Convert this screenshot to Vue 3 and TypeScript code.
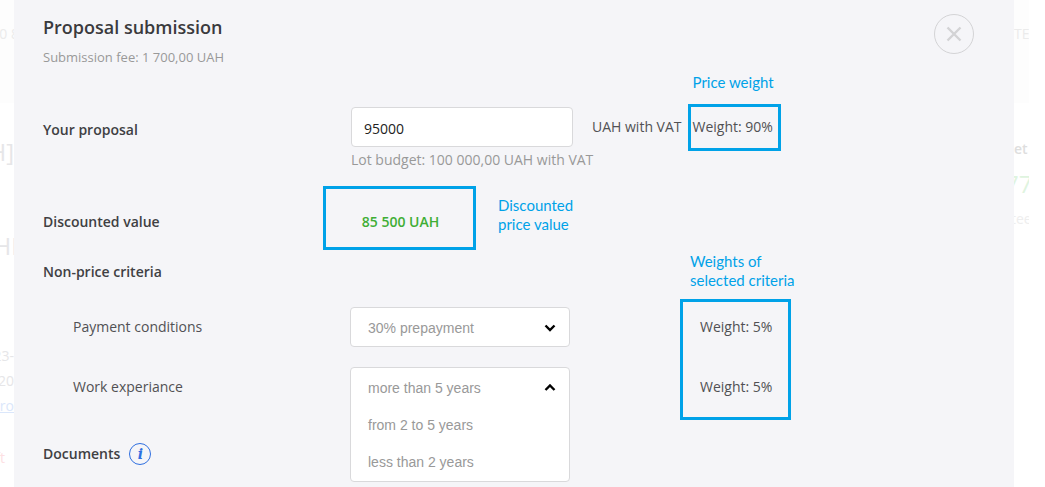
<script setup lang="ts">
import { ref, computed } from 'vue'

const proposal = ref('95000')
const payment = ref('30% prepayment')
const experience = ref('more than 5 years')

const paymentOptions: string[] = ['30% prepayment', '50% prepayment', 'Postpayment']
const experienceOptions: string[] = ['more than 5 years', 'from 2 to 5 years', 'less than 2 years']

const priceWeight = 90
const criteriaWeights: number[] = [5, 5]

const discounted = computed(() => {
  const value = Math.round((Number(proposal.value) || 0) * (priceWeight / 100))
  return String(value).replace(/\B(?=(\d{3})+$)/g, ' ') + ' UAH'
})
</script>

<template>
  <div class="page">
    <div class="strip strip-left" aria-hidden="true">
      <p class="ghost first">0 8</p>
      <p class="ghost big heading">H]</p>
      <p class="ghost big city">HI</p>
      <p class="ghost date">23-</p>
      <p class="ghost">20</p>
      <p class="ghost blue">ro</p>
      <p class="ghost red">ft</p>
    </div>

    <main class="modal" role="dialog" aria-labelledby="dialog-title">
      <header class="head">
        <div>
          <h1 id="dialog-title">Proposal submission</h1>
          <p class="fee">Submission fee: 1 700,00 UAH</p>
        </div>
        <button class="close" type="button" aria-label="Close">
          <svg viewBox="0 0 40 40" width="40" height="40">
            <circle cx="20" cy="20" r="19.5" fill="none" stroke="#d3d3d5" />
            <path d="M13.5 13.5 26.5 26.5M26.5 13.5 13.5 26.5" fill="none" stroke="#d3d3d5" stroke-width="2.4" />
          </svg>
        </button>
      </header>

      <form @submit.prevent>
        <div class="price-row">
          <label class="name price-label" for="proposal">Your proposal</label>
          <div class="price-field">
            <input id="proposal" v-model="proposal" type="text" inputmode="numeric" />
            <p class="hint">Lot budget: 100 000,00 UAH with VAT</p>
          </div>
          <div class="price-side">
            <span>UAH with VAT</span>
            <span class="frame price-frame">
              <span class="note above-price">Price weight</span>
              Weight: {{ priceWeight }}%
            </span>
          </div>
        </div>

        <div class="discount-row">
          <label class="name discount-label" for="discounted">Discounted value</label>
          <output id="discounted" class="frame discount" for="proposal">{{ discounted }}</output>
          <p class="note">Discounted<br />price value</p>
        </div>

        <h2 class="name section">Non-price criteria</h2>

        <div class="criteria">
          <div class="fields">
            <div class="field">
              <label for="payment">Payment conditions</label>
              <div class="picker">
                <select id="payment" v-model="payment" class="closed">
                  <option v-for="o in paymentOptions" :key="o">{{ o }}</option>
                </select>
                <svg class="arrow" viewBox="0 0 12 8" width="12" height="8" aria-hidden="true">
                  <path d="M1.5 1.5 6 6 10.5 1.5" fill="none" stroke="#000" stroke-width="2.4" />
                </svg>
              </div>
            </div>
            <div class="field">
              <label for="experience">Work experiance</label>
              <div class="picker">
                <select id="experience" v-model="experience" class="open" size="3">
                  <option v-for="o in experienceOptions" :key="o">{{ o }}</option>
                </select>
                <svg class="arrow" viewBox="0 0 12 8" width="12" height="8" aria-hidden="true">
                  <path d="M1.5 6 6 1.5 10.5 6" fill="none" stroke="#000" stroke-width="2.4" />
                </svg>
              </div>
            </div>
          </div>
          <div class="frame weights">
            <span class="note above-weights">Weights of<br />selected criteria</span>
            <span v-for="(w, i) in criteriaWeights" :key="i" class="weight">Weight: {{ w }}%</span>
          </div>
        </div>

        <div class="documents">
          <h2 class="name">Documents</h2>
          <button class="info" type="button" aria-label="About documents">i</button>
        </div>
      </form>
    </main>

    <div class="strip strip-right" aria-hidden="true">
      <p class="ghost first">TE</p>
      <p class="ghost bold">et</p>
      <p class="ghost big green">77</p>
      <p class="ghost pale">tee</p>
    </div>
  </div>
</template>

<style>
body {
  margin: 0;
  background: #fff;
}
</style>

<style scoped>
* {
  box-sizing: border-box;
}
p,
h1,
h2 {
  margin: 0;
}
.page {
  display: grid;
  grid-template-columns: 14px minmax(0, 1fr) 15px;
  min-height: 100vh;
  padding-right: 16px;
  font: 14px/20px 'Open Sans', 'Noto Sans', sans-serif;
  color: #515154;
}
.strip {
  overflow: hidden;
  background: linear-gradient(#fdfdfd 103px, #fff 103px);
}
.ghost {
  color: #e6e6e8;
  line-height: 25px;
  white-space: nowrap;
}
.strip-left .ghost {
  display: flex;
  justify-content: flex-end;
}
.ghost.first {
  margin-top: 21px;
  color: #ebebeb;
}
.strip-left .ghost.first {
  margin-right: -5px;
}
.ghost.big {
  font-size: 24px;
}
.ghost.heading {
  margin-top: 93px;
}
.ghost.city {
  margin-top: 69px;
}
.strip-left .ghost.city {
  margin-right: -4px;
}
.ghost.date {
  margin-top: 85px;
}
.ghost.blue {
  color: #dbe7fb;
  text-decoration: underline;
}
.ghost.red {
  margin-top: 27px;
  color: #fde0e3;
}
.strip-left .ghost.red {
  margin-right: 9px;
}
.ghost.bold {
  margin-top: 90px;
  color: #dedede;
  font-weight: 600;
}
.ghost.green {
  margin-top: 10px;
  margin-left: -9px;
  color: #dff4df;
}
.ghost.pale {
  margin-top: 10px;
  margin-left: -3px;
  color: #eeeeee;
}

.modal {
  padding: 14px 40px 0 29px;
  background: #f5f5f8;
}
.head {
  display: flex;
  justify-content: space-between;
  align-items: flex-start;
}
h1 {
  color: #3a3a3d;
  font-size: 18px;
  font-weight: 600;
  line-height: 26px;
}
.fee {
  margin-top: 7px;
  color: #999;
  font-size: 13px;
}
.close {
  padding: 0;
  border: 0;
  background: none;
  cursor: pointer;
}
.close svg {
  display: block;
}
.name {
  color: #404043;
  font-size: 14px;
  font-weight: 600;
  line-height: 20px;
}
.frame {
  position: relative;
  border: 3px solid #00a2e8;
}
.note {
  color: #00a2e8;
  font: 15px/19px Lato, 'Open Sans', sans-serif;
  white-space: nowrap;
}

.price-row {
  display: grid;
  grid-template-columns: 308px 222px 1fr;
  margin-top: 40px;
}
.price-label {
  padding-top: 13px;
}
input {
  display: block;
  width: 100%;
  height: 40px;
  padding: 2px 12px 0;
  border: 1px solid #d9d9db;
  border-radius: 4px;
  background: #fff;
  color: #222;
  font: inherit;
}
.hint {
  margin-top: 3px;
  color: #999;
  white-space: nowrap;
}
.price-side {
  display: flex;
  align-items: center;
  gap: 6px;
  height: 40px;
  padding-left: 19px;
  white-space: nowrap;
}
.price-frame {
  padding: 10px 5px 11px 2px;
}
.above-price {
  position: absolute;
  bottom: calc(100% + 15px);
  left: 2px;
}

.discount-row {
  display: grid;
  grid-template-columns: 280px 153px 1fr;
  align-items: center;
  margin-top: 16px;
}
.discount-label {
  padding-top: 8px;
}
.discount {
  height: 64px;
  padding: 23px 0 0 2px;
  color: #3fae35;
  font-weight: 600;
  text-align: center;
}
.discount-row .note {
  padding: 0 0 6px 22px;
}

.section {
  margin-top: 12px;
}
.criteria {
  display: grid;
  grid-template-columns: 637px 111px;
  margin-top: 17px;
}
.fields {
  display: grid;
  align-content: start;
  gap: 20px;
  padding-top: 8px;
}
.field {
  display: grid;
  grid-template-columns: 277px 220px;
  height: 40px;
  padding-left: 30px;
  line-height: 40px;
}
.picker {
  position: relative;
}
select {
  appearance: none;
  display: block;
  width: 100%;
  margin: 0;
  border: 1px solid #d9d9db;
  border-radius: 4px;
  background: #fff;
  color: #999;
  font: 14px/20px 'Liberation Sans', Arial, sans-serif;
}
.closed {
  height: 40px;
  padding: 1px 17px 0;
}
.open {
  position: absolute;
  top: 0;
  left: 0;
  height: 115px;
  padding: 3px 0 0;
  overflow: hidden;
}
.open option {
  min-height: 37px;
  padding: 9px 17px 8px;
  line-height: 20px;
}
.open option:checked {
  background: #fff linear-gradient(#fff, #fff);
  color: #999;
}
.arrow {
  position: absolute;
  top: 17px;
  right: 14px;
  pointer-events: none;
}
.weights {
  display: grid;
  gap: 20px;
  padding: 5px 0 10px 17px;
}
.weight {
  line-height: 40px;
}
.above-weights {
  position: absolute;
  bottom: calc(100% + 12px);
  left: 7px;
}

.documents {
  display: flex;
  align-items: center;
  gap: 9px;
  margin-top: 23px;
}
.info {
  width: 22px;
  height: 22px;
  padding: 0;
  border: 1px solid #2f6fe0;
  border-radius: 50%;
  background: none;
  color: #2f6fe0;
  font: italic bold 14px/20px 'DejaVu Serif', serif;
  text-align: center;
  cursor: pointer;
}
</style>
